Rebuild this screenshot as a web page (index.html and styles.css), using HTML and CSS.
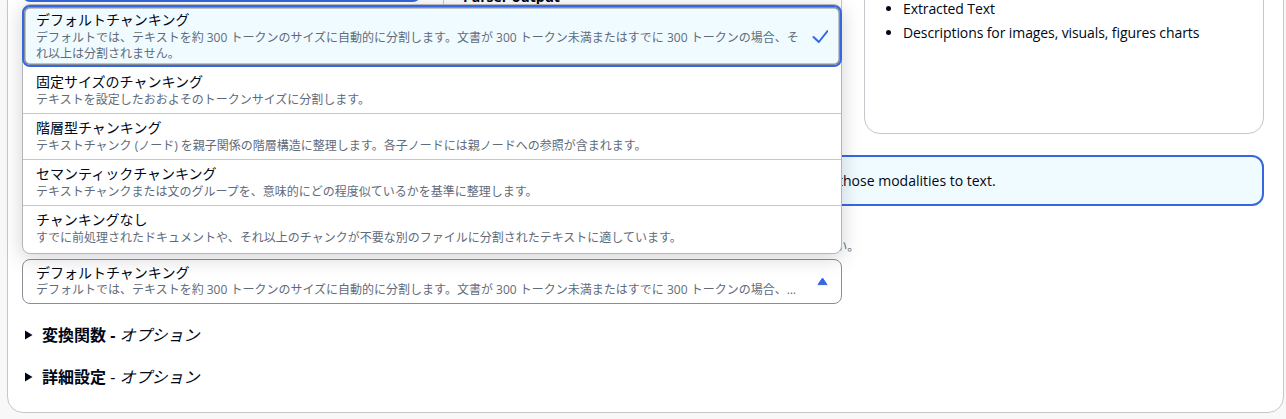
FILE: index.html
```html
<!DOCTYPE html>
<html lang="ja">
<head>
<meta charset="utf-8">
<title>チャンキング戦略</title>
<link rel="stylesheet" href="styles.css">
</head>
<body>
<div class="card">
  <div class="top-row">
    <div class="tile tile-selected"></div>
    <div class="tile tile-plain"><div class="tile-title">Parser output</div></div>
    <div class="output-card">
      <ul class="output-list">
        <li>Extracted Text</li>
        <li>Descriptions for images, visuals, figures charts</li>
      </ul>
    </div>
  </div>

  <div class="alert">
    <svg class="alert-icon" viewBox="0 0 16 16" width="16" height="16"><circle cx="8" cy="8" r="7" fill="none" stroke="currentColor" stroke-width="2"/><path d="M8 7v5M8 4v1" stroke="currentColor" stroke-width="2"/></svg>
    <div class="alert-text">The parser extracts text and also generates descriptions of visual content. Additional charges may apply for converting those modalities to text.</div>
  </div>

  <div class="field">
    <div class="field-label">チャンキング戦略</div>
    <div class="field-desc">ナレッジベースがソースからドキュメントを取り込む際に、検索を効率化するためにコンテンツをより小さなチャンクに分割する方法を選択してください。</div>
    <div class="select-wrap">
      <div class="dropdown">
        <div class="opt opt-selected">
          <div class="opt-text">
            <div class="opt-title">デフォルトチャンキング</div>
            <div class="opt-desc">デフォルトでは、テキストを約 300 トークンのサイズに自動的に分割します。文書が 300 トークン未満またはすでに 300 トークンの場合、それ以上は分割されません。</div>
          </div>
          <svg class="check" viewBox="0 0 16 16" width="16" height="16"><path d="M1.5 9 L6.8 14 L15.5 3" fill="none" stroke="currentColor" stroke-width="2" stroke-linecap="round" stroke-linejoin="round"/></svg>
        </div>
        <div class="opt opt-after">
          <div class="opt-title">固定サイズのチャンキング</div>
          <div class="opt-desc">テキストを設定したおおよそのトークンサイズに分割します。</div>
        </div>
        <div class="opt">
          <div class="opt-title">階層型チャンキング</div>
          <div class="opt-desc">テキストチャンク (ノード) を親子関係の階層構造に整理します。各子ノードには親ノードへの参照が含まれます。</div>
        </div>
        <div class="opt">
          <div class="opt-title">セマンティックチャンキング</div>
          <div class="opt-desc">テキストチャンクまたは文のグループを、意味的にどの程度似ているかを基準に整理します。</div>
        </div>
        <div class="opt">
          <div class="opt-title">チャンキングなし</div>
          <div class="opt-desc">すでに前処理されたドキュメントや、それ以上のチャンクが不要な別のファイルに分割されたテキストに適しています。</div>
        </div>
      </div>
      <div class="trigger">
        <div class="trigger-text">
          <div class="trigger-title">デフォルトチャンキング</div>
          <div class="trigger-desc">デフォルトでは、テキストを約 300 トークンのサイズに自動的に分割します。文書が 300 トークン未満またはすでに 300 トークンの場合、それ以上は分割されません。</div>
        </div>
        <svg class="caret" viewBox="0 0 16 16" width="16" height="16"><polygon points="4,11.6 13,11.6 8.5,5" fill="currentColor" stroke="currentColor" stroke-width="1" stroke-linejoin="round"/></svg>
      </div>
    </div>
  </div>

  <div class="sections">
    <div class="section-head">
      <svg class="expand" viewBox="0 0 16 16" width="16" height="16"><polygon points="3,3.5 10.5,8 3,12.5" fill="currentColor"/></svg>
      <span><strong>変換関数 -</strong> <em class="opt-label">オプション</em></span>
    </div>
    <div class="section-head">
      <svg class="expand" viewBox="0 0 16 16" width="16" height="16"><polygon points="3,3.5 10.5,8 3,12.5" fill="currentColor"/></svg>
      <span><strong>詳細設定</strong> - <em class="opt-label">オプション</em></span>
    </div>
  </div>
</div>
</body>
</html>
```

FILE: styles.css
```css
* {
  box-sizing: border-box;
}

html,
body {
  margin: 0;
}

body {
  background: #f8f8f8;
  font-family: "Open Sans", "Noto Sans CJK JP", sans-serif;
  color: #000716;
  font-size: 14px;
  line-height: 20px;
  overflow: hidden;
}

.card {
  margin: -60px 2px 0 7px;
  background: #ffffff;
  border: 1px solid #c6c6cd;
  border-radius: 16px;
  padding: 0 19px 24px 14px;
}

/* top row (mostly hidden behind the open dropdown) */
.top-row {
  display: grid;
  grid-template-columns: 399px 399px 1fr;
  column-gap: 22px;
  align-items: start;
}

.tile {
  border-radius: 8px;
}

.tile-selected {
  height: 61px;
  border: 2px solid #3568e0;
  background: #f0fbff;
}

.tile-plain {
  height: 193px;
  border: 1px solid #c6c6cd;
  padding: 45px 0 0 19px;
}

.tile-title {
  font-weight: 700;
}

.output-card {
  height: 193px;
  border: 1px solid #c6c6cd;
  border-radius: 16px;
  padding: 55px 20px 0 19px;
}

.output-list {
  margin: 0;
  padding-left: 19px;
}

.output-list li {
  line-height: 24px;
  letter-spacing: -0.1px;
}

/* info alert */
.alert {
  margin-top: 21px;
  display: flex;
  align-items: flex-start;
  gap: 8px;
  border: 2px solid #3568e0;
  border-radius: 12px;
  background: #f0fbff;
  padding: 14px 16px 13px 16px;
}

.alert-icon {
  flex: none;
  margin-top: 2px;
  color: #3568e0;
}

.alert-text {
  white-space: nowrap;
}

/* form field */
.field {
  margin-top: 13px;
}

.field-label {
  font-weight: 700;
  line-height: 20px;
}

.field-desc {
  font-size: 12px;
  line-height: 16px;
  color: #5f6b7a;
  white-space: nowrap;
}

.select-wrap {
  position: relative;
  width: 820px;
  margin-top: 4px;
}

.trigger {
  display: flex;
  align-items: center;
  gap: 8px;
  height: 45px;
  border: 1px solid #8c8c94;
  border-radius: 8px;
  padding: 4px 11px 5px 13px;
  background: #ffffff;
}

.trigger-text {
  flex: 1;
  min-width: 0;
}

.trigger-title {
  line-height: 18px;
}

.trigger-desc {
  font-size: 12px;
  line-height: 16px;
  color: #5f6b7a;
  white-space: nowrap;
  overflow: hidden;
  text-overflow: ellipsis;
}

.caret {
  flex: none;
  color: #3568e0;
}

/* open dropdown list */
.dropdown {
  position: absolute;
  left: 0;
  right: 0;
  bottom: calc(100% + 5px);
  z-index: 2;
  background: #ffffff;
  border: 1px solid #b4b4bb;
  border-radius: 8px;
  padding-bottom: 2px;
  box-shadow: 0 4px 20px 1px rgba(0, 7, 22, 0.16);
}

.opt {
  border-top: 1px solid #c6c6cd;
  padding: 4px 12px 5px 13px;
}

.opt-after {
  border-top-color: transparent;
}

.opt-title {
  line-height: 20px;
}

.opt-desc {
  font-size: 12px;
  line-height: 16px;
  color: #5f6b7a;
}

.opt-selected {
  margin: 0 -1px;
  display: flex;
  align-items: center;
  gap: 8px;
  border: 2px solid #3568e0;
  border-radius: 8px;
  background: #f0fbff;
  box-shadow: inset 0 0 0 1.5px #8d8d96;
  padding: 3px 12px 3px 12px;
}

.opt-text {
  flex: 1;
  min-width: 0;
}

.check {
  flex: none;
  color: #3568e0;
}

/* expandable sections */
.sections {
  display: flex;
  flex-direction: column;
  gap: 20px;
  padding-top: 20px;
}

.section-head {
  display: flex;
  align-items: center;
  gap: 4px;
  font-size: 16px;
  line-height: 22px;
  color: #000716;
}

.expand {
  flex: none;
  color: #000716;
}

.section-head strong {
  font-weight: 700;
}

.opt-label {
  font-style: italic;
  font-synthesis: style;
}
```
